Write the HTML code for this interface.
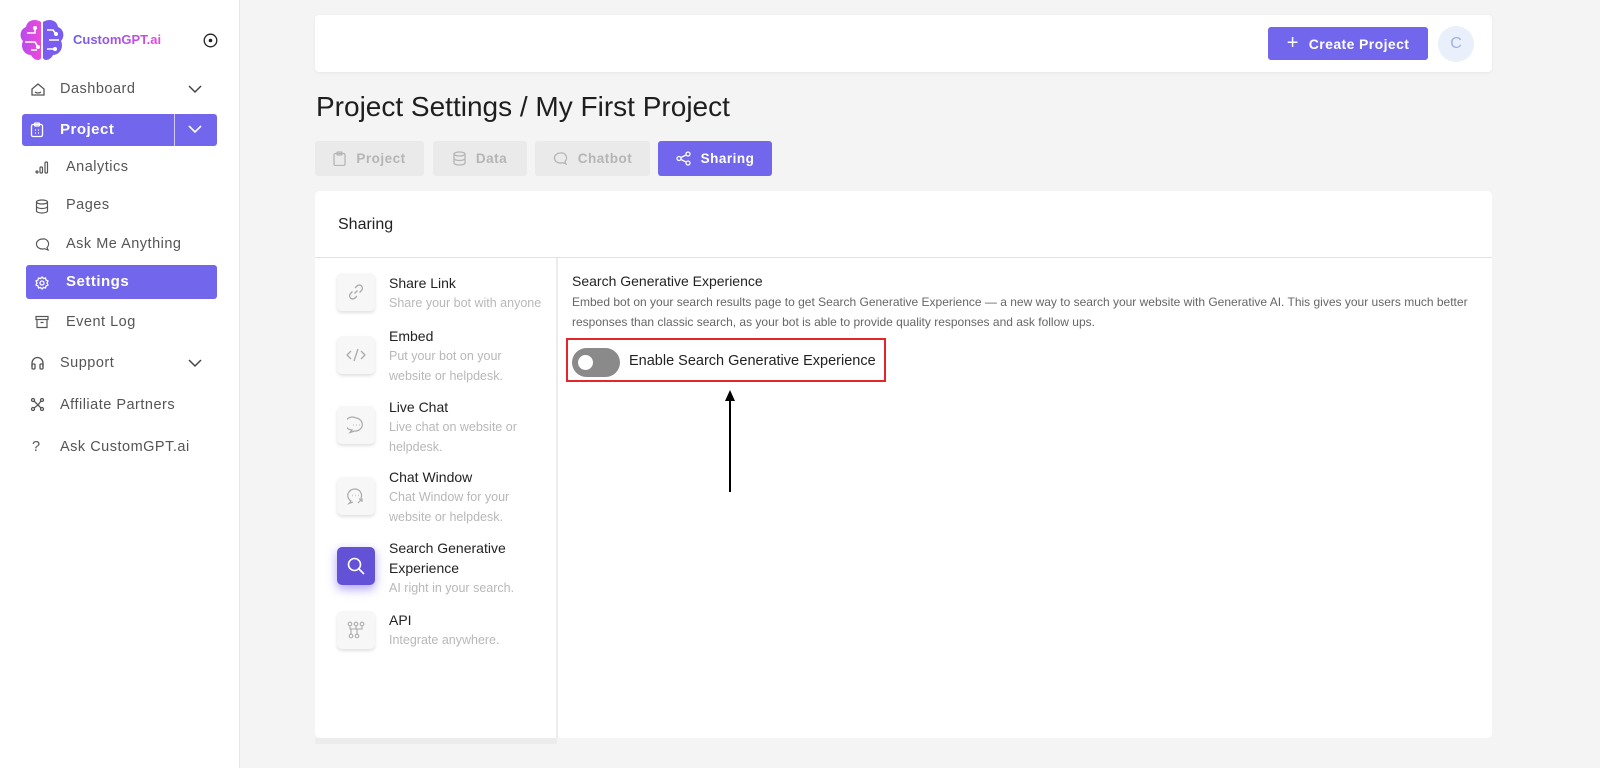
<!DOCTYPE html>
<html><head><meta charset="utf-8"><style>
*{box-sizing:border-box;margin:0;padding:0}
body{width:1600px;height:768px;background:#f4f4f4;font-family:"Liberation Sans",sans-serif;position:relative;overflow:hidden;color:#222}
.abs{position:absolute}
#side{left:0;top:0;width:240px;height:768px;background:#fff;border-right:1px solid #e6e6e6}
.nav{position:absolute;font-size:14.5px;color:#555;letter-spacing:.5px;display:flex;align-items:center}
.nav svg{position:absolute}
.pill{position:absolute;background:#7166ec;border-radius:3px;color:#fff}
.tab{position:absolute;top:141px;height:35px;background:#eaeaea;border-radius:3px;color:#b5b5b5;font-weight:bold;font-size:13.5px;display:flex;align-items:center;justify-content:center;gap:10px;letter-spacing:.5px}
.ib{position:absolute;left:337px;width:38px;height:38px;border-radius:5px;background:#f7f7f7;box-shadow:0 2px 3px rgba(0,0,0,.12);display:flex;align-items:center;justify-content:center}
.it{position:absolute;left:389px;font-size:14px;color:#222;line-height:20px}
.it span{display:block;font-size:12.5px;color:#b8b8b8}
</style></head><body>
<div id="side" class="abs">
 <svg class="abs" style="left:19px;top:18px" width="46" height="44" viewBox="0 0 46 44"><defs><linearGradient id="g" x1="0" x2="1"><stop offset="0" stop-color="#b44cf0"/><stop offset="1" stop-color="#f048d8"/></linearGradient></defs><path d="M22 4C16 0 8 2 7 9 1 11 0 19 4 23 1 29 5 37 12 37 15 43 21 43 22 40Z" fill="url(#g)"/><path d="M24 4C30 0 38 2 39 9 45 11 46 19 42 23 45 29 41 37 34 37 31 43 25 43 24 40Z" fill="#7b5cf0"/><g stroke="#fff" stroke-width="1.6" fill="none"><path d="M8 15h8v-5M6 24h10l3 5M12 32h6M28 12h6l3 4M30 22h10M28 31h8"/></g><g fill="#fff"><circle cx="16" cy="10" r="2"/><circle cx="19" cy="29" r="2"/><circle cx="37" cy="16" r="2"/><circle cx="36" cy="31" r="2"/></g></svg>
 <div class="abs" style="left:73px;top:32px;font-weight:bold;font-size:13px;background:linear-gradient(90deg,#6a5cf0,#e248e0);-webkit-background-clip:text;color:transparent">CustomGPT.ai</div>
 <svg class="abs" style="left:203px;top:33px" width="15" height="15"><circle cx="7.5" cy="7.5" r="6.3" fill="none" stroke="#222" stroke-width="1.3"/><circle cx="7.5" cy="7.5" r="1.8" fill="#222"/></svg>

 <div class="nav" style="left:60px;top:81px">Dashboard</div>
 <svg class="abs" style="left:30px;top:82px" width="16" height="16" fill="none" stroke="#555" stroke-width="1.3"><path d="M2 13V7l6-5 6 5v6z M5 10q3 2 6 0"/></svg>
 <svg class="abs" style="left:187px;top:83px" width="16" height="12" fill="none" stroke="#444" stroke-width="1.5"><path d="M2 3l6 6 6-6"/></svg>

 <div class="pill" style="left:22px;top:114px;width:195px;height:32px"></div>
 <div class="abs" style="left:174px;top:114px;width:1px;height:32px;background:#cfcaf8"></div>
 <div class="nav" style="left:60px;top:121px;color:#fff;font-weight:bold;font-size:15px">Project</div>
 <svg class="abs" style="left:30px;top:122px" width="14" height="16" fill="none" stroke="#fff" stroke-width="1.3"><rect x="1.5" y="2.5" width="11" height="12" rx="1.5"/><rect x="4.5" y="1" width="5" height="3" rx="1"/><path d="M5 8h1M8 8h1M5 11h1M8 11h1"/></svg>
 <svg class="abs" style="left:187px;top:123px" width="16" height="12" fill="none" stroke="#fff" stroke-width="1.6"><path d="M2 3l6 6 6-6"/></svg>

 <div class="nav" style="left:66px;top:159px">Analytics</div>
 <svg class="abs" style="left:35px;top:160px" width="14" height="14" fill="none" stroke="#555" stroke-width="1.2"><circle cx="2" cy="12" r="1"/><rect x="5" y="7" width="2.5" height="6" rx="1"/><rect x="10" y="2" width="2.5" height="11" rx="1"/></svg>
 <div class="nav" style="left:66px;top:197px">Pages</div>
 <svg class="abs" style="left:35px;top:199px" width="14" height="15" fill="none" stroke="#555" stroke-width="1.2"><ellipse cx="7" cy="3" rx="5.5" ry="2"/><path d="M1.5 3v9c0 1 2.5 2 5.5 2s5.5-1 5.5-2V3M1.5 7.5c0 1 2.5 2 5.5 2s5.5-1 5.5-2"/></svg>
 <div class="nav" style="left:66px;top:236px">Ask Me Anything</div>
 <svg class="abs" style="left:35px;top:237px" width="15" height="15" fill="none" stroke="#555" stroke-width="1.2"><path d="M7.5 2a6 5 0 1 0 2 9.7L13 13l-1-2.5A5 5 0 0 0 7.5 2z"/></svg>

 <div class="pill" style="left:26px;top:265px;width:191px;height:34px"></div>
 <div class="nav" style="left:66px;top:273px;color:#fff;font-weight:bold;font-size:15px">Settings</div>
 <svg class="abs" style="left:35px;top:276px" width="14" height="14" fill="none" stroke="#fff" stroke-width="1.3"><circle cx="7" cy="7" r="2"/><path d="M7 1l1.5 1.5 2-.5.5 2 2 1-1 2 1 2-2 1-.5 2-2-.5L7 13l-1.5-1.5-2 .5-.5-2-2-1 1-2-1-2 2-1 .5-2 2 .5z"/></svg>
 <div class="nav" style="left:66px;top:314px">Event Log</div>
 <svg class="abs" style="left:35px;top:315px" width="14" height="14" fill="none" stroke="#555" stroke-width="1.2"><rect x="1" y="1.5" width="12" height="3"/><path d="M2 4.5v8h10v-8M5.5 7.5h3"/></svg>

 <div class="nav" style="left:60px;top:355px">Support</div>
 <svg class="abs" style="left:30px;top:356px" width="15" height="14" fill="none" stroke="#555" stroke-width="1.3"><path d="M2 11V7a5.5 5.5 0 0 1 11 0v4"/><rect x="2" y="8" width="3" height="5" rx="1"/><rect x="10" y="8" width="3" height="5" rx="1"/></svg>
 <svg class="abs" style="left:187px;top:357px" width="16" height="12" fill="none" stroke="#444" stroke-width="1.5"><path d="M2 3l6 6 6-6"/></svg>
 <div class="nav" style="left:60px;top:397px">Affiliate Partners</div>
 <svg class="abs" style="left:30px;top:397px" width="15" height="15" fill="none" stroke="#555" stroke-width="1.3"><circle cx="3" cy="3" r="1.5"/><circle cx="12" cy="3" r="1.5"/><circle cx="3" cy="12" r="1.5"/><circle cx="12" cy="12" r="1.5"/><path d="M4 4l4 4 3-4M8 8l-4 3M8 8l3 3"/></svg>
 <div class="nav" style="left:60px;top:439px">Ask CustomGPT.ai</div>
 <div class="nav" style="left:32px;top:439px">?</div>
</div>

<div class="abs" style="left:315px;top:15px;width:1177px;height:57px;background:#fff;border-radius:4px;box-shadow:0 1px 3px rgba(0,0,0,.06)"></div>
<div class="abs" style="left:1268px;top:27px;width:160px;height:33px;background:#7166ec;border-radius:3px;color:#fff;font-weight:bold;font-size:14px;display:flex;align-items:center;justify-content:center;gap:10px;letter-spacing:.4px"><span style="font-weight:normal;font-size:20px">+</span>Create Project</div>
<div class="abs" style="left:1438px;top:26px;width:36px;height:36px;border-radius:50%;background:#e9f0fb;color:#9db3e4;font-size:16px;display:flex;align-items:center;justify-content:center">C</div>

<div class="abs" style="left:316px;top:91px;font-size:28px;color:#1e1e1e">Project Settings / My First Project</div>

<div class="tab" style="left:315px;width:109px"><svg width="13" height="15" fill="none" stroke="#b5b5b5" stroke-width="1.3"><rect x="1" y="2.5" width="11" height="12" rx="1.5"/><rect x="4" y="1" width="5" height="3" rx="1"/></svg>Project</div>
<div class="tab" style="left:433px;width:94px"><svg width="13" height="15" fill="none" stroke="#b5b5b5" stroke-width="1.3"><ellipse cx="6.5" cy="3" rx="5.5" ry="2"/><path d="M1 3v9c0 1 2.5 2 5.5 2s5.5-1 5.5-2V3M1 7.5c0 1 2.5 2 5.5 2s5.5-1 5.5-2"/></svg>Data</div>
<div class="tab" style="left:535px;width:115px"><svg width="15" height="15" fill="none" stroke="#b5b5b5" stroke-width="1.3"><path d="M7.5 2a6 5 0 1 0 2 9.7L13 13l-1-2.5A5 5 0 0 0 7.5 2z"/></svg>Chatbot</div>
<div class="tab" style="left:658px;width:114px;background:#7166ec;color:#fff"><svg width="15" height="15" fill="none" stroke="#fff" stroke-width="1.3"><circle cx="3" cy="7.5" r="2"/><circle cx="12" cy="3" r="2"/><circle cx="12" cy="12" r="2"/><path d="M5 6.5l5-2.5M5 8.5l5 2.5"/></svg>Sharing</div>

<div class="abs" style="left:315px;top:191px;width:1177px;height:547px;background:#fff;border-radius:5px"></div>
<div class="abs" style="left:338px;top:216px;font-size:16px;color:#222">Sharing</div>
<div class="abs" style="left:315px;top:257px;width:1177px;height:1px;background:#e2e2e2"></div>
<div class="abs" style="left:556px;top:258px;width:2px;height:480px;background:#ececec"></div>
<div class="abs" style="left:315px;top:738px;width:242px;height:6px;background:#ececec"></div>

<div class="ib" style="top:273px"><svg width="18" height="18" fill="none" stroke="#aaa" stroke-width="1.3"><path d="M7.5 10.5l3-3M8 5l2-2a3 3 0 0 1 4.5 4.5l-2 2M10 13l-2 2a3 3 0 0 1-4.5-4.5l2-2"/></svg></div>
<div class="it" style="top:273px">Share Link<span>Share your bot with anyone</span></div>
<div class="ib" style="top:336px"><svg width="20" height="16" fill="none" stroke="#aaa" stroke-width="1.3"><path d="M5 4L1 8l4 4M15 4l4 4-4 4M12 2L8 14"/></svg></div>
<div class="it" style="top:326px">Embed<span>Put your bot on your<br>website or helpdesk.</span></div>
<div class="ib" style="top:406px"><svg width="18" height="18" fill="none" stroke="#aaa" stroke-width="1.2"><path d="M9 2a7 6.5 0 1 0-4 12l-2 2.5 4.5-1.5A7 6.5 0 1 0 9 2z"/><path d="M6 9h.5M9 9h.5M12 9h.5" stroke-width="1.6"/></svg></div>
<div class="it" style="top:397px">Live Chat<span>Live chat on website or<br>helpdesk.</span></div>
<div class="ib" style="top:477px"><svg width="20" height="18" fill="none" stroke="#aaa" stroke-width="1.2"><path d="M9 2a7 6.5 0 0 0-4 12l-2 2.5 4-1.5M15 11A7 6.5 0 0 0 9 2"/><path d="M6 8.5h.5M9 8.5h.5M12 8.5h.5" stroke-width="1.6"/><path d="M12 16l4-4M13 12h3v3"/></svg></div>
<div class="it" style="top:467px">Chat Window<span>Chat Window for your<br>website or helpdesk.</span></div>
<div class="ib" style="top:547px;background:#6452d6;box-shadow:0 4px 10px rgba(120,100,240,.6)"><svg width="20" height="20" fill="none" stroke="#fff" stroke-width="1.6"><circle cx="8.5" cy="8.5" r="6"/><path d="M13 13l5 5"/></svg></div>
<div class="it" style="top:538px">Search Generative<br>Experience<span>AI right in your search.</span></div>
<div class="ib" style="top:611px"><svg width="18" height="18" fill="none" stroke="#aaa" stroke-width="1.1"><circle cx="3" cy="3" r="1.8"/><circle cx="9" cy="3" r="1.8"/><circle cx="15" cy="3" r="1.8"/><circle cx="4" cy="15" r="1.8"/><circle cx="10" cy="15" r="1.8"/><path d="M3 5v3h12V5M9 5v3M4 8v5M10 8v5"/></svg></div>
<div class="it" style="top:610px">API<span>Integrate anywhere.</span></div>

<div class="abs" style="left:572px;top:273px;font-size:14px;color:#222">Search Generative Experience</div>
<div class="abs" style="left:572px;top:292px;font-size:12px;color:#666;line-height:20px;width:910px">Embed bot on your search results page to get Search Generative Experience — a new way to search your website with Generative AI. This gives your users much better responses than classic search, as your bot is able to provide quality responses and ask follow ups.</div>
<div class="abs" style="left:566px;top:338px;width:320px;height:44px;border:2px solid #e8242b"></div>
<div class="abs" style="left:572px;top:348px;width:48px;height:29px;border-radius:15px;background:#8a8a8a"></div>
<div class="abs" style="left:578px;top:355px;width:15px;height:15px;border-radius:50%;background:#fff"></div>
<div class="abs" style="left:629px;top:353px;font-size:14.5px;color:#222">Enable Search Generative Experience</div>
<div class="abs" style="left:729px;top:398px;width:2px;height:94px;background:#000"></div>
<svg class="abs" style="left:724px;top:390px" width="12" height="12"><path d="M6 0L1 11h10z" fill="#000"/></svg>
</body></html>
